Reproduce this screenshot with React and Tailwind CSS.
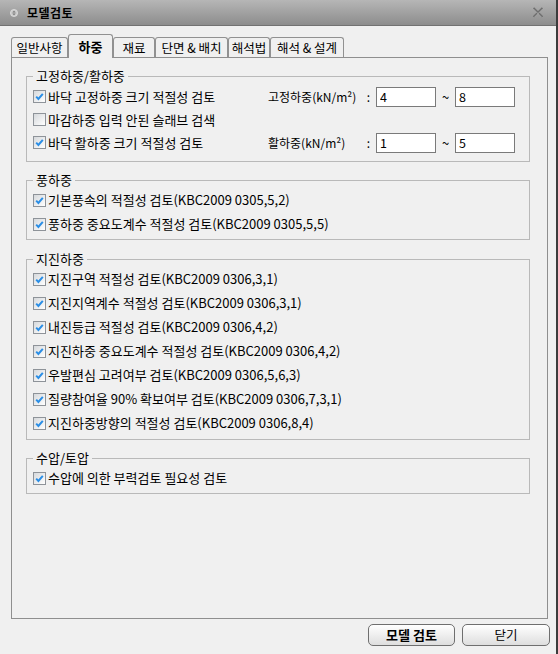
import React, { useState } from 'react';

const FONT = { fontFamily: '"Noto Sans CJK KR", "Liberation Sans", sans-serif' };

const tabs = [
    { label: '일반사항', w: 'w-[57px]' },
    { label: '하중', w: 'w-[45px]' },
    { label: '재료', w: 'w-[42px]' },
    { label: '단면 & 배치', w: 'w-[73px]' },
    { label: '해석법', w: 'w-[42px]' },
    { label: '해석 & 설계', w: 'w-[74px]' },
];

const windItems = ['기본풍속의 적절성 검토(KBC2009 0305,5,2)', '풍하중 중요도계수 적절성 검토(KBC2009 0305,5,5)'];

const seismicItems = [
    '지진구역 적절성 검토(KBC2009 0306,3,1)',
    '지진지역계수 적절성 검토(KBC2009 0306,3,1)',
    '내진등급 적절성 검토(KBC2009 0306,4,2)',
    '지진하중 중요도계수 적절성 검토(KBC2009 0306,4,2)',
    '우발편심 고려여부 검토(KBC2009 0306,5,6,3)',
    '질량참여율 90% 확보여부 검토(KBC2009 0306,7,3,1)',
    '지진하중방향의 적절성 검토(KBC2009 0306,8,4)',
];

const CheckBox = ({ checked, onClick }) => (
    <span
        onClick={onClick}
        className="w-[13px] h-[13px] shrink-0 border border-[#8e9399] bg-gradient-to-br from-[#d6d9dc] to-white flex items-center justify-center"
    >
        {checked && (
            <svg width="9" height="9" viewBox="0 0 9 9">
                <path d="M1.2 4.6 L3.4 6.9 L7.8 1.8" stroke="#2a8ee6" strokeWidth="2" fill="none" />
            </svg>
        )}
    </span>
);

const CheckRow = ({ label, init = true, h = 'h-[24px]', children }) => {
    const [on, setOn] = useState(init);
    return (
        <div className={`flex items-center ${h}`}>
            <div className="flex items-center w-[235px] shrink-0 gap-[2px]">
                <CheckBox checked={on} onClick={() => setOn(!on)} />
                <span className="whitespace-nowrap">{label}</span>
            </div>
            {children}
        </div>
    );
};

const Field = ({ value }) => (
    <input
        defaultValue={value}
        className="w-[60px] h-[20px] border border-[#7a7a7a] bg-white px-[3px] text-[12.5px] outline-none"
        style={FONT}
    />
);

const Range = ({ label, from, to }) => (
    <div className="flex items-center">
        <span className="w-[108px] pr-[6px] flex justify-between whitespace-nowrap text-[12px]">
            <span>{label}</span>
            <span>:</span>
        </span>
        <Field value={from} />
        <span className="w-[19px] text-center">~</span>
        <Field value={to} />
    </div>
);

const Group = ({ title, className, children }) => (
    <fieldset className={`border border-[#b9b9b9] px-[6px] ${className}`}>
        <legend className="px-[3px] leading-[14px]">{title}</legend>
        {children}
    </fieldset>
);

export default function App() {
    const [active, setActive] = useState(1);

    return (
        <div className="w-[558px] h-[654px] bg-[#f0f0f0] border-r-2 border-[#3c3c3c] flex flex-col text-[13px] text-black" style={FONT}>
            {/* Title bar */}
            <div className="h-[26px] shrink-0 bg-gradient-to-b from-[#b6b6b6] to-[#8d8d8d] border-b border-[#727272] flex items-center pl-[10px] pr-[12px]">
                <svg width="8" height="8" viewBox="0 0 9 9" className="mr-[9px]">
                    <circle cx="4.5" cy="4.5" r="4" fill="#c9c9c9" stroke="#e6e6e6" strokeWidth="0.8" />
                    <path d="M2.6 4 L4.5 2 L6.4 4 Z M2.6 5 L4.5 7 L6.4 5 Z" fill="#777" />
                </svg>
                <span className="font-bold text-[12px] tracking-[0.5px]">모델검토</span>
                <svg width="12" height="11" viewBox="0 0 12 11" className="ml-auto">
                    <path d="M1.5 1 L10.5 10 M10.5 1 L1.5 10" stroke="#6e6e6e" strokeWidth="1.8" />
                    <path d="M1 1.6 L10 10.6 M11 1.6 L2 10.6" stroke="#c4c4c4" strokeWidth="0.6" />
                </svg>
            </div>

            {/* Tabs */}
            <div className="flex items-end pl-[11px] pt-[7px] h-[31px] shrink-0 relative z-10">
                {tabs.map((t, i) => (
                    <button
                        key={t.label}
                        onClick={() => setActive(i)}
                        className={`${t.w} flex items-center justify-center border border-b-0 border-[#919191] rounded-t-[3px] whitespace-nowrap ${
                            i === active
                                ? 'h-[24px] mb-[-1px] bg-[#f0f0f0] font-bold text-[13px]'
                                : 'h-[20px] bg-[#f0f0f0] text-[12.5px] pt-[1px]'
                        }`}
                    >
                        {t.label}
                    </button>
                ))}
            </div>

            {/* Panel */}
            <div className="ml-[11px] w-[537px] h-[562px] shrink-0 border border-[#8f8f8f] pl-[14px] pr-[17px] pt-[11px] flex flex-col">
                <Group title="고정하중/활하중" className="pt-[2px] pb-[7px]">
                    <CheckRow label="바닥 고정하중 크기 적절성 검토" h="h-[23px]">
                        <Range label="고정하중(kN/m²)" from="4" to="8" />
                    </CheckRow>
                    <CheckRow label="마감하중 입력 안된 슬래브 검색" init={false} h="h-[23px]" />
                    <CheckRow label="바닥 활하중 크기 적절성 검토" h="h-[23px]">
                        <Range label="활하중(kN/m²)" from="1" to="5" />
                    </CheckRow>
                </Group>

                <Group title="풍하중" className="mt-[11px] pt-[1px] pb-[3px]">
                    {windItems.map(l => (
                        <CheckRow key={l} label={l} />
                    ))}
                </Group>

                <Group title="지진하중" className="mt-[12px] pt-[1px] pb-[4px]">
                    {seismicItems.map(l => (
                        <CheckRow key={l} label={l} />
                    ))}
                </Group>

                <Group title="수압/토압" className="mt-[11px] pt-[1px] pb-[3px]">
                    <CheckRow label="수압에 의한 부력검토 필요성 검토" />
                </Group>
            </div>

            {/* Buttons */}
            <div className="flex justify-end gap-[7px] pr-[6px] mt-[5px]">
                <button className="w-[87px] h-[22px] rounded-[5px] border border-[#6f6f6f] bg-gradient-to-b from-white to-[#dedede] font-bold text-[13px]">
                    모델 검토
                </button>
                <button className="w-[88px] h-[22px] rounded-[5px] border border-[#6f6f6f] bg-gradient-to-b from-white to-[#dedede] text-[12.5px]">
                    닫기
                </button>
            </div>
        </div>
    );
}
